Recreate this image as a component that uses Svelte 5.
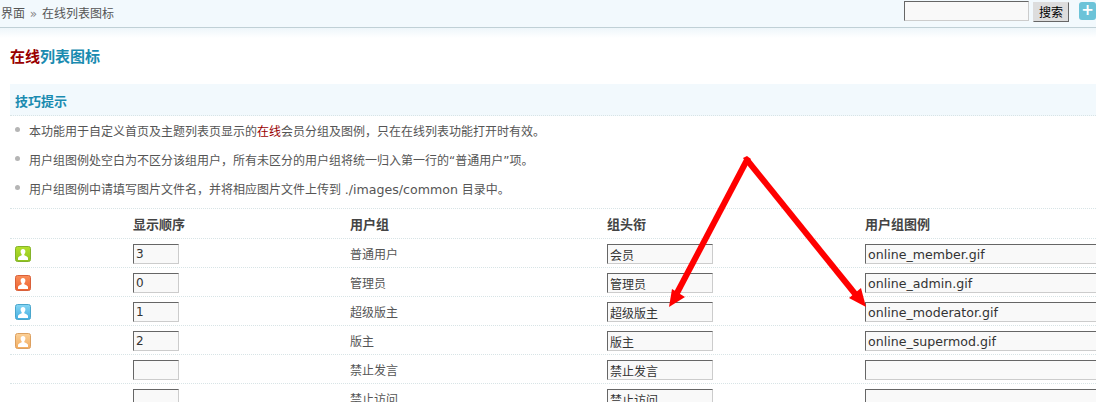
<script>
  const rows = [
    { top: '#b4e02c', color: '#8fc31f', edge: '#84b32a', order: '3', group: '普通用户', title: '会员', icon: 'online_member.gif' },
    { top: '#f98e5a', color: '#ee6230', edge: '#d9603a', order: '0', group: '管理员', title: '管理员', icon: 'online_admin.gif' },
    { top: '#86d6f4', color: '#45aee0', edge: '#4aa6cc', order: '1', group: '超级版主', title: '超级版主', icon: 'online_moderator.gif' },
    { top: '#fbd198', color: '#f2ac60', edge: '#dca060', order: '2', group: '版主', title: '版主', icon: 'online_supermod.gif' },
    { order: '', group: '禁止发言', title: '禁止发言', icon: '' },
    { order: '', group: '禁止访问', title: '禁止访问', icon: '' }
  ];
</script>

<div class="page">
  <header class="topbar">
    <div class="crumb">界面 <span class="sep">»</span> 在线列表图标</div>
    <div class="search">
      <input class="search-input" type="text" />
      <button class="search-btn" type="button">搜索</button>
      <span class="plus">+</span>
    </div>
  </header>
  <div class="fade"></div>

  <main class="main">
    <h1 class="title"><em>在线</em>列表图标</h1>

    <h2 class="tips-head">技巧提示</h2>
    <ul class="tips">
      <li>本功能用于自定义首页及主题列表页显示的<em>在线</em>会员分组及图例，只在在线列表功能打开时有效。</li>
      <li>用户组图例处空白为不区分该组用户，所有未区分的用户组将统一归入第一行的“普通用户”项。</li>
      <li>用户组图例中请填写图片文件名，并将相应图片文件上传到 <span class="path">./images/common</span> 目录中。</li>
    </ul>

    <div class="table">
      <div class="row head">
        <div></div>
        <div>显示顺序</div>
        <div>用户组</div>
        <div>组头衔</div>
        <div>用户组图例</div>
      </div>
      {#each rows as row, i}
        <div class="row">
          <div class="icon-cell">
            {#if row.color}
              <svg width="16" height="16" viewBox="0 0 16 16">
                <defs>
                  <linearGradient id="badge{i}" x1="0" y1="0" x2="0" y2="1">
                    <stop offset="0" stop-color={row.top} />
                    <stop offset="1" stop-color={row.color} />
                  </linearGradient>
                </defs>
                <rect x="0.5" y="0.5" width="15" height="15" rx="2" fill="url(#badge{i})" stroke={row.edge} />
                <path d="M8 3C6.500 3 5.600 4 5.600 5.500c0 1.200.5 2.100 1.100 2.700v1C5.400 9.800 3.500 10.300 3 11.800V14h10v-2.200c-.5-1.500-2.400-2-3.700-2.600v-1c.6-.6 1.100-1.500 1.100-2.700C10.400 4 9.500 3 8 3z" fill="#fff" />
              </svg>
            {/if}
          </div>
          <div><input class="field small" type="text" value={row.order} /></div>
          <div class="group">{row.group}</div>
          <div><input class="field mid" type="text" value={row.title} /></div>
          <div><input class="field wide" type="text" value={row.icon} /></div>
        </div>
      {/each}
    </div>
  </main>

  <svg class="arrows" width="1096" height="402" viewBox="0 0 1096 402">
    <g stroke="#f00" stroke-width="6" fill="none">
      <path d="M747 160L677 293" />
      <path d="M747 160L856 295" />
    </g>
    <g fill="#f00">
      <path d="M669 307L672 289L685 297Z" />
      <path d="M866 307L849 298L861 288Z" />
      <path d="M743 158L747 156L751 159L747 164Z" />
    </g>
  </svg>
</div>

<style>
  :global(body) {
    margin: 0;
    background: #fff;
    overflow: hidden;
  }

  .page {
    position: relative;
    width: 1096px;
    height: 402px;
    overflow: hidden;
    font: 12px/1.5 "DejaVu Sans", "Noto Sans CJK SC", sans-serif;
    color: #555;
  }

  .topbar {
    height: 27px;
    display: flex;
    justify-content: space-between;
    align-items: flex-start;
    background: #f2f9fd;
    border-bottom: 1px solid #c0d0d6;
  }

  .fade {
    height: 10px;
    background: linear-gradient(#eef6fa, #fff);
  }

  .crumb {
    padding: 5px 0 0 1px;
  }

  .sep {
    margin: 0 1px;
    color: #888;
  }

  .search {
    display: flex;
    align-items: flex-start;
    padding-top: 1px;
  }

  .search-input {
    box-sizing: border-box;
    width: 125px;
    height: 20px;
    margin: 0 4px 0 0;
    padding: 0 2px;
    background: #f9f9f9;
    border: 1px solid;
    border-color: #666 #ccc #ccc #666;
  }

  .search-btn {
    box-sizing: border-box;
    width: 36px;
    height: 20px;
    margin: 1px 10px 0 0;
    padding: 0;
    background: #ddd;
    border: 1px solid;
    border-color: #ddd #666 #666 #ddd;
    color: #000;
    font: 12px/18px "Noto Sans CJK SC", sans-serif;
  }

  .plus {
    width: 17px;
    height: 18px;
    margin-top: 1px;
    border-radius: 3px;
    background: #6cc3d8;
    color: #fff;
    font: bold 15px/17px "DejaVu Sans", sans-serif;
    text-align: center;
  }

  .main {
    padding: 9px 0 0 10px;
  }

  .title {
    margin: 0 0 16px;
    font-size: 15px;
    line-height: 21px;
    font-weight: bold;
    color: #1a8bb0;
  }

  .title em,
  .tips em {
    font-style: normal;
    color: #900;
  }

  .tips-head {
    margin: 0;
    height: 29px;
    padding: 2px 0 0 5px;
    background: #f2f9fd;
    border-bottom: 1px dotted #d8e4e6;
    font-size: 13px;
    line-height: 31px;
    color: #1a8bb0;
  }

  .tips {
    list-style: none;
    margin: 0;
    padding: 2px 0 0;
  }

  .tips li {
    position: relative;
    height: 29px;
    padding-left: 19px;
    line-height: 29px;
  }

  .tips li::before {
    content: "";
    position: absolute;
    left: 5px;
    top: 9px;
    width: 5px;
    height: 5px;
    border-radius: 50%;
    background: #b5b5b5;
  }

  .path {
    font-size: 12.6px;
    line-height: 1;
  }

  .table {
    width: 1086px;
    margin-top: 3px;
    border-top: 1px dotted #d8e4e6;
  }

  .row {
    display: grid;
    grid-template-columns: 123px 217px 257px 258px 231px;
    align-items: center;
    height: 26px;
    padding-top: 2px;
    border-bottom: 1px dotted #d8e4e6;
  }

  .head {
    padding-top: 3px;
    font-size: 13px;
    font-weight: bold;
    color: #444;
  }

  .group {
    padding-top: 1px;
  }

  .icon-cell {
    display: flex;
    padding-left: 5px;
  }

  .field {
    display: block;
    box-sizing: border-box;
    height: 20px;
    padding: 0 2px;
    background: #f9f9f9;
    border: 1px solid;
    border-color: #666 #ccc #ccc #666;
    font: 12px "DejaVu Sans", "Noto Sans CJK SC", sans-serif;
    color: #333;
    outline: none;
  }

  .small {
    width: 46px;
  }

  .mid {
    width: 106px;
  }

  .wide {
    width: 250px;
    font-size: 12.6px;
  }

  .arrows {
    position: absolute;
    left: 0;
    top: 0;
    pointer-events: none;
  }
</style>
